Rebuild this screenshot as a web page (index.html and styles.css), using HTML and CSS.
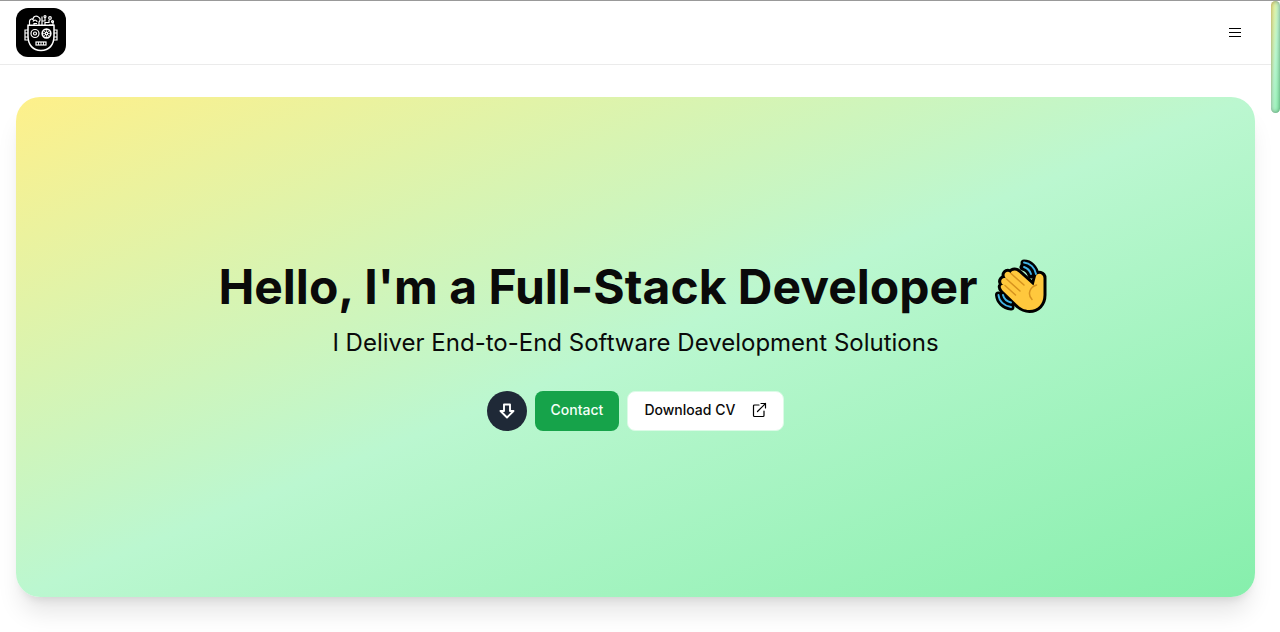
FILE: index.html
```html
<!DOCTYPE html>
<html lang="en">
<head>
<meta charset="utf-8">
<title>Full-Stack Developer</title>
<link rel="stylesheet" href="styles.css">
</head>
<body>
<div class="page">
  <header class="header">
    <a class="logo">
      <svg width="50" height="49" viewBox="0 0 50 49" fill="none" stroke="#fff" stroke-width="1.2">
        <path d="M12 17.3H38V28C38 37 33 42.5 25 42.5S12 37 12 28Z" stroke-width="1.5"/>
        <path d="M12 22H9V32H12M38 22H41V32H38M9 25H12M9 29H12M38 25H41M38 29H41"/>
        <circle cx="19" cy="25.500" r="4"/>
        <circle cx="19" cy="25.500" r="1.500"/>
        <circle cx="30.500" cy="25.500" r="4.300" stroke-width="1.700"/>
        <path d="M30.500 21V30M26 25.500H35M27.500 22.500L33.500 28.500M33.500 22.500L27.500 28.500" stroke-width=".7"/>
        <circle cx="30.500" cy="25.500" r="1.300" fill="#000"/>
        <rect x="20" y="34" width="10" height="3"/>
        <path d="M22.500 34V37M25 34V37M27.500 34V37" stroke-width=".9"/>
        <path d="M13.500 17V13.500C13.500 11 16 10.500 17 11.500C17 8 21 7 23 9.500C25 11 24 13 23 14V17M17 13.500C18.500 11.500 21 12 21 14M18 17V15.500H21M26 17V8.500M26 13H29V9M29 17V14.500H33V12M33 17H37V14H36"/>
        <circle cx="29" cy="8.500" r="1"/>
        <circle cx="34" cy="10" r="1.300"/>
        <circle cx="36.500" cy="13.500" r="1"/>
      </svg>
    </a>
    <svg class="menu" width="16" height="16" viewBox="0 0 16 16" stroke="#000" stroke-width="1"><path d="M2 3.500H14M2 7.500H14M2 11.500H14"/></svg>
  </header>
  <main class="main">
    <section class="hero">
      <h1 class="title"><span>Hello, I'm a Full-Stack Developer</span>
        <svg class="wave" width="54" height="56" viewBox="0 0 54 56" fill="none" stroke-linecap="round" stroke-linejoin="round">
          <path d="M30 4C36 4 41 9 42 16M4.500 36C5 42 10 47.500 17 48" stroke="#000" stroke-width="7"/>
          <path d="M29 8C33 9 36 12 37 16M9 35C9 39 13 43 17 43.500" stroke="#000" stroke-width="7"/>
          <path class="hand-outline" d="M8 25C5.500 21 9 18 12 19.500C8 15 13 10.500 16.500 14C18.500 10.500 22.500 11 25 13.500L39.500 26.500L42 17C43.500 13 49.500 14.500 49.500 19V36C49.500 45 43.500 51 35.500 51C30 51 26.500 49 22 44.500L9 32C5 28 7 25 10 26Z"/>
          <path d="M11 26.500L21.500 36M12.500 20L26 32M17 14.500L30 26M42.500 26C36 28 33 35 38 40.500" stroke="#d6921e" stroke-width="1.500"/>
          <path d="M30 3.500C36 4 41 9 42 15M30 8C33 9 36 12 37 15M4.500 36C5 42 10 47 17 48M9 36C10 40 13 42.500 17 43.500" stroke="#42b4e6" stroke-width="1.900"/>
        </svg>
      </h1>
      <p class="subtitle">I Deliver End-to-End Software Development Solutions</p>
      <div class="actions">
        <a class="down"><svg width="18" height="18" viewBox="0 0 18 18" fill="none" stroke="#fff" stroke-width="1.900" stroke-linejoin="round"><path d="M6 2.500H12V9H15.500L9 15.500L2.500 9H6Z"/></svg></a>
        <a class="btn contact">Contact</a>
        <a class="btn download"><span>Download CV</span>
          <svg width="16" height="16" viewBox="0 0 16 16" fill="none" stroke="#000" stroke-width="1.200" stroke-linecap="round" stroke-linejoin="round"><path d="M8 3H3.500Q2.500 3 2.500 4V13.500Q2.500 14.500 3.500 14.500H12Q13 14.500 13 13.500V9M10 1.500H14.500V6M14.500 1.500L6.500 9.500"/></svg>
        </a>
      </div>
    </section>
  </main>
</div>
<div class="scroll-thumb"></div>
</body>
</html>
```
FILE: styles.css
```css
* { box-sizing: border-box; }
body {
  margin: 0;
  height: 632px;
  overflow: hidden;
  display: flex;
  align-items: flex-start;
  background: #fff;
  color: #0a0a0a;
  font-family: Inter, "Liberation Sans", sans-serif;
  border-top: 1px solid #999;
}
.page { width: 1271px; flex: none; }
.header {
  height: 64px;
  padding: 0 28px 0 16px;
  display: flex;
  align-items: center;
  justify-content: space-between;
  border-bottom: 1px solid #ebebeb;
}
.logo { width: 50px; height: 49px; border-radius: 12px; background: #000; }
.logo svg { display: block; }
.menu { display: block; }
.main { padding: 31.500px 16px; }
.hero {
  height: 500px;
  border-radius: 24px;
  background: linear-gradient(to bottom right, #fef08a, #bbf7d0, #86efac);
  box-shadow: 0 20px 25px -5px rgba(0,0,0,.1), 0 8px 10px -6px rgba(0,0,0,.1);
  display: flex;
  flex-direction: column;
  align-items: center;
  padding-top: 161px;
}
.title {
  margin: 0 5px 0 0;
  height: 58px;
  display: flex;
  align-items: center;
  gap: 16px;
  font-size: 48px;
  line-height: 58px;
  font-weight: 700;
  white-space: nowrap;
}
.hand-outline {
  fill: #ffc83d;
  stroke: #000;
  stroke-width: 6px;
  paint-order: stroke;
}
.subtitle {
  margin: 11px 0 0;
  font-size: 24px;
  line-height: 32px;
  white-space: nowrap;
}
.actions { display: flex; align-items: center; gap: 8px; margin-top: 32px; }
.down {
  width: 40px;
  height: 40px;
  border-radius: 50%;
  background: #1f2937;
  display: flex;
  align-items: center;
  justify-content: center;
}
.btn {
  height: 40px;
  padding: 0 16px;
  border-radius: 8px;
  display: flex;
  align-items: center;
  font-size: 14px;
  line-height: 20px;
  font-weight: 500;
  white-space: nowrap;
}
.contact { padding-bottom: 1px; background: #16a34a; color: #f5fff8; }
.download { padding-bottom: 1px; background: #fff; gap: 16px; border: 1px solid #dcfbe7; }
.scroll-thumb {
  width: 9px;
  height: 112px;
  border-radius: 5px;
  background: linear-gradient(to bottom right, #fef08a, #bbf7d0, #86efac);
  box-shadow: inset 0 0 4px rgba(0,0,0,.4);
}
```
